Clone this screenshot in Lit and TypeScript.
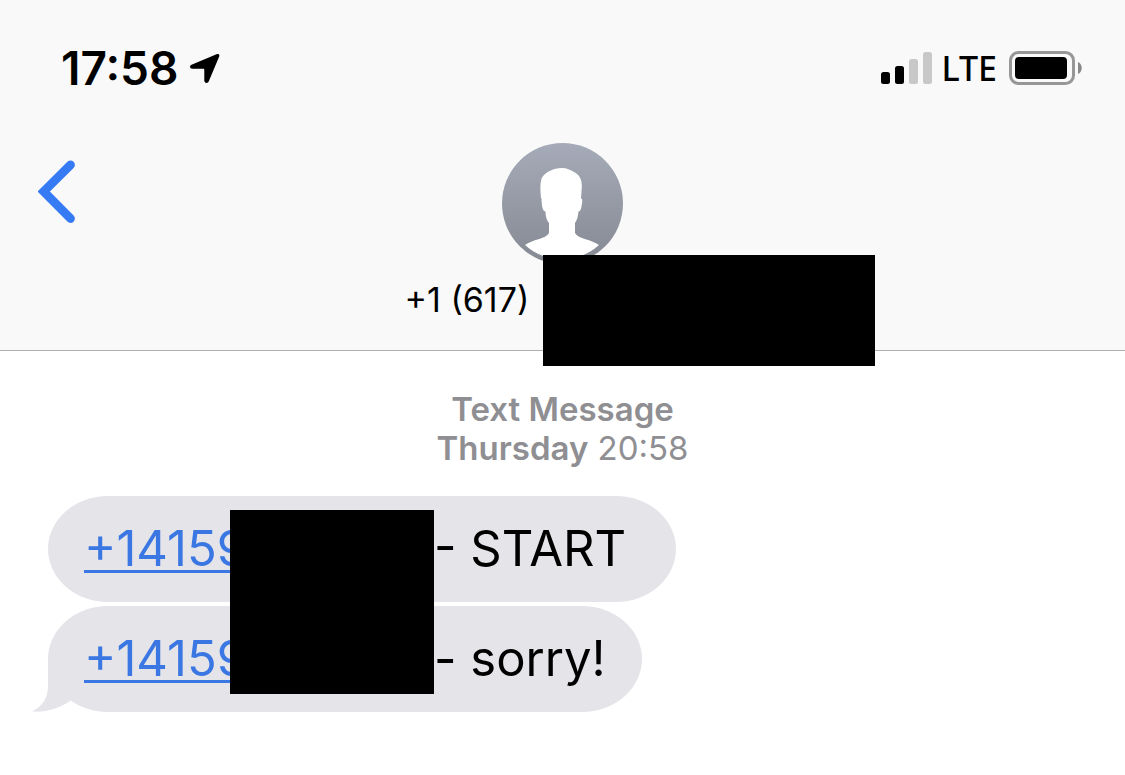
import { LitElement, html, css, svg, nothing } from "lit";
import { customElement, property, state } from "lit/decorators.js";

@customElement("status-bar")
class StatusBar extends LitElement {
  static styles = css`
    :host {
      display: flex;
      justify-content: space-between;
      align-items: center;
      height: 56px;
      padding: 40px 42px 0 61px;
    }
    .group {
      display: flex;
      align-items: center;
    }
    .time {
      font-size: 46px;
      line-height: 56px;
      font-weight: 600;
    }
    .arrow {
      margin-left: 12px;
    }
    .network {
      font-family: "Noto Sans", "Open Sans", sans-serif;
      font-size: 34px;
      line-height: 56px;
      font-weight: 500;
      margin: 0 12px 0 8px;
    }
    svg {
      display: block;
    }
  `;

  render() {
    const bars = [12, 18, 25, 32];
    return html`
      <div class="group">
        <time class="time">17:58</time>
        <svg class="arrow" width="30" height="31" viewBox="0 0 30 31" aria-hidden="true">
          <path d="M1.500 11.700 26.500 1.200c2-.8 3.400.4 2.700 2.400L18.800 28.300c-1 2.400-4.500 2-4.500-.8V17c0-.9-.4-1.300-1.300-1.300H2.500c-2.800 0-3.300-3-1-4Z" />
        </svg>
      </div>
      <div class="group">
        <svg width="52" height="32" viewBox="0 0 52 32" role="img" aria-label="Signal">
          ${bars.map(
            (h, i) => svg`<rect x=${i * 14} y=${32 - h} width="9" height=${h} rx="2.500"
              fill=${i < 2 ? "#000" : "#c8c8c8"} />`
          )}
        </svg>
        <span class="network">LTE</span>
        <svg width="74" height="34" viewBox="0 0 74 34" role="img" aria-label="Battery">
          <rect x="1.500" y="1.500" width="63" height="31" rx="8" fill="none" stroke="#979797" stroke-width="3" />
          <rect x="6" y="6" width="52" height="22" rx="4" />
          <path d="M69 11c5 2 5 10 0 12Z" fill="#888" />
        </svg>
      </div>
    `;
  }
}

@customElement("contact-header")
class ContactHeader extends LitElement {
  static styles = css`
    :host {
      display: grid;
      grid-template-columns: 80px 1fr 80px;
      padding: 47px 16px 30px;
    }
    .back {
      align-self: start;
      width: 80px;
      padding: 17px 20px 0 22px;
      border: 0;
      background: none;
      cursor: pointer;
    }
    svg {
      display: block;
    }
    .contact {
      display: flex;
      flex-direction: column;
      align-items: center;
      gap: 16px;
    }
    .name {
      position: relative;
      width: 316px;
      font-size: 34px;
      line-height: 40px;
    }
    .cover {
      position: absolute;
      left: 138px;
      top: -25px;
      width: 332px;
      height: 111px;
      background: #000;
    }
  `;

  @property() name = "";

  render() {
    return html`
      <button class="back" aria-label="Back">
        <svg width="38" height="64" viewBox="0 0 38 64">
          <path d="M32.500 4.800 5.800 31.500 32.500 58.500" fill="none" stroke="#367bf3" stroke-width="8.800" stroke-linecap="round" />
        </svg>
      </button>
      <div class="contact">
        <svg width="121" height="121" viewBox="0 0 121 121" role="img" aria-label="Contact">
          <defs>
            <linearGradient id="shade" x1="0" y1="0" x2="0" y2="1">
              <stop offset="0" stop-color="#a6abb9" />
              <stop offset="1" stop-color="#858992" />
            </linearGradient>
          </defs>
          <circle cx="60.500" cy="60.500" r="60.500" fill="url(#shade)" />
          <path
            fill="#fff"
            d="M39 55.500c-1-10-.8-17 1-21 3-5 11-9.500 20-9.500 5 0 8 2 12 4 6 3 8 8 7.800 15L79 55.500c1.500 0 1.500 2 1 5s-1 8-3.500 8c-.5 5-1.500 9-3.500 11.500V90c3 6 17 6.500 24 12-10 9-22 14-37 14s-27-5-37-14c7-5.500 21-6 24-12V80c-2-2-3.500-7-3.500-11.500-2.500 0-3.300-4-3.700-8-.4-3-.4-5 .2-5Z"
          />
        </svg>
        <div class="name">${this.name}<span class="cover"></span></div>
      </div>
    `;
  }
}

@customElement("message-bubble")
class MessageBubble extends LitElement {
  static styles = css`
    :host {
      display: block;
      width: fit-content;
    }
    .bubble {
      position: relative;
      display: flex;
      padding: 23px 36px;
      border-radius: 60px / 53px;
      background: #e5e4e9;
      font-size: 49px;
      line-height: 60px;
      white-space: pre;
    }
    .number {
      position: relative;
      width: 350px;
      color: #3a77e2;
      text-decoration-thickness: 3px;
      text-underline-offset: 4px;
      text-decoration-skip-ink: none;
    }
    .tail {
      position: absolute;
      left: -16px;
      bottom: 0;
    }
  `;

  @property() number = "";
  @property() text = "";
  @property({ type: Boolean }) last = false;

  render() {
    return html`
      <div class="bubble">${this.last
          ? html`<svg class="tail" width="60" height="56" viewBox="0 0 60 56" aria-hidden="true">
              <path fill="#e5e4e9" d="M16 0v30C16 42 10 51 0 55.500c14 1 27-3 38-10.500L60 30V0Z" />
            </svg>`
          : nothing}<a class="number" href="tel:${this.number}">${this.number}</a><span>${this.text}</span></div>
    `;
  }
}

@customElement("app-root")
class AppRoot extends LitElement {
  static styles = css`
    :host {
      display: block;
      min-height: 100vh;
      background: #fff;
      color: #000;
      font-family: Inter, "Liberation Sans", sans-serif;
    }
    .top {
      background: #f9f9f9;
      border-bottom: 1px solid #b0b0b2;
    }
    .stamp {
      margin: 0;
      padding: 39px 0 28px;
      color: #8f8f93;
      font-size: 33px;
      line-height: 39px;
      text-align: center;
    }
    .stamp b {
      font-weight: 600;
    }
    .thread {
      position: relative;
      display: flex;
      flex-direction: column;
      gap: 4px;
      padding: 0 48px;
    }
    .cover {
      position: absolute;
      left: 230px;
      top: 14px;
      width: 204px;
      height: 184px;
      background: #000;
    }
  `;

  @state() private messages = ["- START ", "- sorry!"];

  render() {
    return html`
      <header class="top">
        <status-bar></status-bar>
        <contact-header name="+1 (617)"></contact-header>
      </header>
      <main>
        <p class="stamp"><b>Text Message</b><br /><b>Thursday</b> 20:58</p>
        <div class="thread">
          ${this.messages.map(
            (text, i) => html`<message-bubble
              number="+14159"
              .text=${text}
              ?last=${i === this.messages.length - 1}
            ></message-bubble>`
          )}
          <span class="cover"></span>
        </div>
      </main>
    `;
  }
}
